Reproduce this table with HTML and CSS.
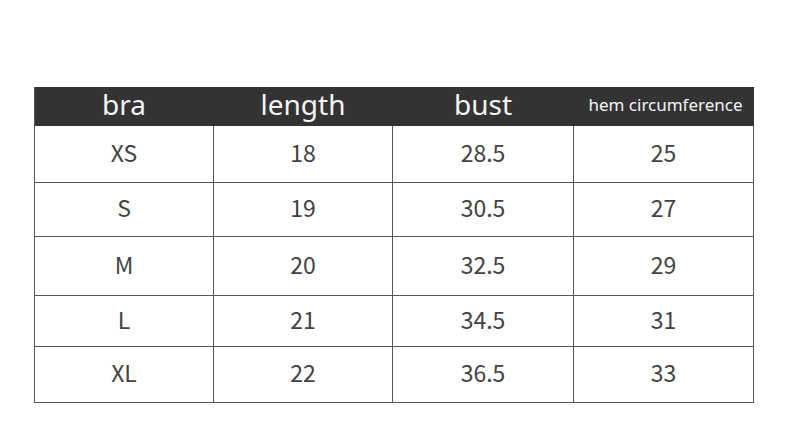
FILE: index.html
```html
<!DOCTYPE html>
<html>
<head>
<meta charset="utf-8">
<link rel="stylesheet" href="styles.css">
</head>
<body>
<div class="page">
  <div class="size-table">
    <div class="cell head big">bra</div>
    <div class="cell head big">length</div>
    <div class="cell head big">bust</div>
    <div class="cell head small">hem circumference</div>

    <div class="cell">XS</div><div class="cell">18</div><div class="cell">28.5</div><div class="cell">25</div>
    <div class="cell">S</div><div class="cell">19</div><div class="cell">30.5</div><div class="cell">27</div>
    <div class="cell">M</div><div class="cell">20</div><div class="cell">32.5</div><div class="cell">29</div>
    <div class="cell">L</div><div class="cell">21</div><div class="cell">34.5</div><div class="cell">31</div>
    <div class="cell">XL</div><div class="cell">22</div><div class="cell">36.5</div><div class="cell">33</div>
  </div>
</div>
</body>
</html>
```

FILE: styles.css
```css
html, body {
  margin: 0;
  padding: 0;
  background: #ffffff;
}
.page {
  width: 790px;
  height: 422px;
  padding: 87px 0 0 34px;
  box-sizing: border-box;
  font-family: "Noto Sans CJK SC", "Noto Sans", sans-serif;
  font-weight: 400;
  color: #424242;
}
.size-table {
  display: grid;
  width: 720px;
  grid-template-columns: 179px 179px 181px 180px;
  grid-template-rows: 39px 57px 54px 59px 51px 56px;
  border-left: 1px solid #555555;
  box-sizing: border-box;
}
.cell {
  display: flex;
  align-items: center;
  justify-content: center;
  border-right: 1px solid #555555;
  border-bottom: 1px solid #555555;
  box-sizing: border-box;
  font-size: 23px;
  line-height: 1;
  padding-bottom: 4px;
}
.head {
  background: #333333;
  color: #f4f4f4;
  font-family: "Noto Sans", sans-serif;
  font-weight: 400;
  border-right-color: #333333;
  border-bottom-color: #333333;
  padding-bottom: 4px;
}
.head.big {
  font-size: 28px;
}
.head.small {
  font-size: 17px;
  padding-left: 4px;
  padding-bottom: 3px;
}
```
